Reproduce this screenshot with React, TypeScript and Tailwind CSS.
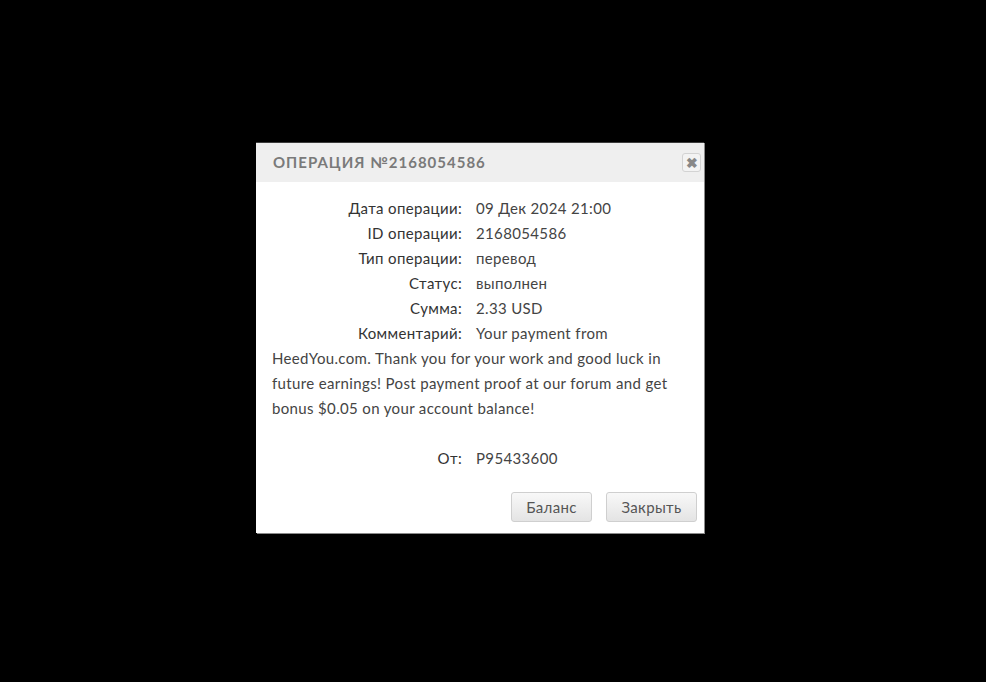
import React from "react";

const rows: [string, string][] = [
  ["Дата операции:", "09 Дек 2024 21:00"],
  ["ID операции:", "2168054586"],
  ["Тип операции:", "перевод"],
  ["Статус:", "выполнен"],
  ["Сумма:", "2.33 USD"],
];

function Label({ children }: { children: React.ReactNode }) {
  return (
    <span className="inline-block w-[204px] pr-[14px] text-right text-[#333]">{children}</span>
  );
}

export default function App() {
  return (
    <div className="min-h-[682px] w-full bg-black pl-[256px] pt-[142px]" style={{ fontFamily: "Lato, 'Noto Sans', sans-serif" }}>
      <div className="w-[448px] bg-white border-t border-[#3c3c3c] shadow-[1px_1px_0_#8a8a8a]">
        <div className="flex h-[39px] items-center justify-between bg-[#efefef] pl-[17px] pr-[3px]">
          <span className="text-[15px] font-bold tracking-[1px] text-[#7a7a7a]">ОПЕРАЦИЯ №2168054586</span>
          <button className="flex h-[19px] w-[19px] items-center justify-center rounded-[3px] border border-[#d3d3d3] bg-[#f3f3f3] text-[14px] font-bold leading-none text-[#888]">
            ✖
          </button>
        </div>
        <div className="px-[16px] pt-[14px] text-[15px] leading-[25px] tracking-[0.35px] text-[#444]">
          {rows.map(([l, v]) => (
            <div key={l}>
              <Label>{l}</Label>
              <span>{v}</span>
            </div>
          ))}
          <div>
            <Label>Комментарий:</Label>
            Your payment from HeedYou.com. Thank you for your work and good luck in future earnings! Post payment proof at our forum and get bonus $0.05 on your account balance!
          </div>
          <div className="h-[25px]" />
          <div>
            <Label>От:</Label>
            <span>P95433600</span>
          </div>
          <div className="-mr-[9px] flex justify-end gap-[14px] pb-[11px] pt-[21px]">
            <button className="h-[30px] w-[81px] rounded-[3px] border border-[#cfcfcf] bg-gradient-to-b from-[#f8f8f8] to-[#e4e4e4] text-[15px] text-[#555]">
              Баланс
            </button>
            <button className="h-[30px] w-[91px] rounded-[3px] border border-[#cfcfcf] bg-gradient-to-b from-[#f8f8f8] to-[#e4e4e4] text-[15px] text-[#555]">
              Закрыть
            </button>
          </div>
        </div>
      </div>
    </div>
  );
}
